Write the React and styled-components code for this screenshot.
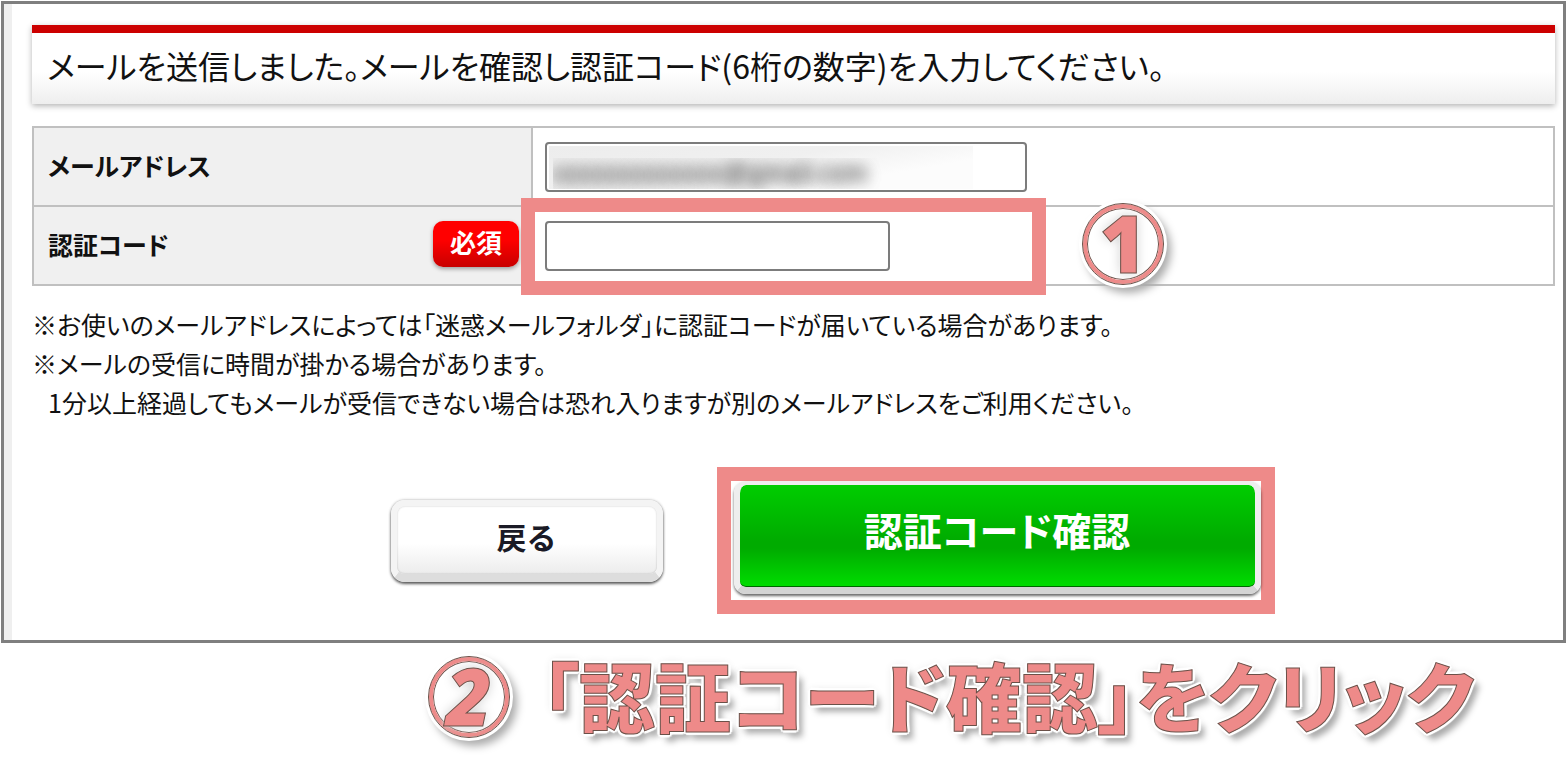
import { useState } from 'react';
import styled, { createGlobalStyle, css } from 'styled-components'

const PINK = '#ee8a89'

const GlobalStyle = createGlobalStyle`
  * {
    box-sizing: border-box;
  }

  body {
    margin: 0;
    background: #fff;
    color: #111;
    font-family: "Noto Sans CJK JP", sans-serif;
    font-feature-settings: "palt";
  }
`;

const Page = styled.main`
  padding: 1px 1px 16px;
`;

const Panel = styled.form`
  border: 3px solid #7f7f7f;
  box-shadow: inset 8px 0 0 #efefef;
  padding: 21px 8px 26px 28px;
`;

const Title = styled.h1`
  margin: 0 0 22px;
  padding: 12px 15px 19px;
  border-top: 8px solid #c00;
  background: linear-gradient(#fff 55%, #eee);
  box-shadow: 0 2px 6px rgba(0, 0, 0, 0.3);
  font-size: 32px;
  font-weight: 400;
  line-height: 40px;
`;

const Table = styled.table`
  width: 100%;
  border-collapse: collapse;
  table-layout: fixed;
`;

const Label = styled.th`
  width: 499px;
  height: 79px;
  padding: 0 12px 4px 14px;
  border: 2px solid #c0c0c0;
  background: #f0f0f0;
  font-size: 25px;
  font-weight: 700;
  text-align: left;
`;

const LabelRow = styled.div`
  display: flex;
  align-items: center;
  justify-content: space-between;
`;

const Required = styled.span`
  padding: 0 17px 4px;
  border-radius: 10px;
  background: linear-gradient(#f00 40%, #c80000);
  box-shadow: 0 2px 4px rgba(0, 0, 0, 0.35);
  color: #fff;
  font-size: 26px;
  font-weight: 700;
  line-height: 42px;
`;

const Field = styled.td`
  position: relative;
  padding: 0 12px;
  border: 2px solid #c0c0c0;
`;

const Input = styled.input`
  display: block;
  width: ${props => props.$wide ? '482px' : '345px'};
  height: 50px;
  padding: 2px 6px;
  border: 2px solid #7c7c7c;
  border-radius: 4px;
  background: #fff;
  font-family: "Liberation Sans", sans-serif;
  font-size: 26px;

  ${props => props.$masked && css`
    padding: 14px 6px 0;
    background: linear-gradient(170deg, #ededed, #f0f0f0 45%, #fcfcfc 75%) 2px 2px / 424px 43px no-repeat;
    color: transparent;
    text-shadow: 0 0 14px #666, 0 0 16px #888;
  `}
`;

const FieldFrame = styled.div`
  position: absolute;
  top: -9px;
  left: -12px;
  width: 525px;
  height: 97px;
  border: 14px solid ${PINK};
  pointer-events: none;
`;

const Notes = styled.div`
  margin-top: 19px;
  font-size: 25px;
  line-height: 39px;
`;

const Note = styled.p`
  margin: 0;
  padding-left: ${props => props.$indent ? '16px' : '0'};
`;

const Actions = styled.div`
  display: flex;
  align-items: center;
  justify-content: center;
  gap: 54px;
  margin-top: 45px;
  padding-left: 78px;
`;

const BackButton = styled.button`
  width: 272px;
  height: 82px;
  padding: 0 0 8px;
  border: 6px solid #f4f4f4;
  border-bottom: 8px solid #ddd;
  border-radius: 14px;
  background: linear-gradient(#fff 55%, #ececec) padding-box;
  box-shadow: 0 2px 3px rgba(0, 0, 0, 0.6), 0 0 3px rgba(0, 0, 0, 0.3), inset 0 0 2px rgba(0, 0, 0, 0.25);
  color: #1a1a26;
  font: 700 30px "Noto Sans CJK JP", sans-serif;
  cursor: pointer;
`;

const SubmitFrame = styled.div`
  padding: 0 0 6px 3px;
  border: 14px solid ${PINK};
`;

const SubmitButton = styled.button`
  display: block;
  width: 527px;
  height: 113px;
  padding: 0 0 14px;
  border: 6px solid #eee;
  border-top-width: 4px;
  border-bottom: 7px solid #d4d4d4;
  border-radius: 12px;
  background: linear-gradient(#00cd00, #00ab00 55%, #00ab00 62%, #00de00) padding-box;
  box-shadow: 0 2px 3px rgba(0, 0, 0, 0.6), inset 0 -1px 0 #060;
  color: #fff;
  font: 700 39px "Noto Sans CJK JP", sans-serif;
  font-feature-settings: "palt";
  cursor: pointer;
`;

// pink lettering with a thin dark outline, white edge and soft grey shadow
const lettering = css`
  color: ${PINK};
  font-weight: 900;
  -webkit-text-stroke: 1px #6b5048;
  text-shadow:
    3px 0 1px #fff, -3px 0 1px #fff, 0 3px 1px #fff, 0 -3px 1px #fff,
    2px 2px 1px #fff, -2px 2px 1px #fff, 2px -2px 1px #fff, -2px -2px 1px #fff,
    6px 7px 6px #aaa, 0 0 10px #ddd;
`;

const StepNumber = styled.span`
  display: flex;
  flex: none;
  align-items: center;
  justify-content: center;
  width: 80px;
  height: 80px;
  border: 4px solid ${PINK};
  border-radius: 50%;
  background: #fff;
  outline: 1px solid #6b5048;
  box-shadow: inset 0 0 0 1px #6b5048, 0 0 0 4px #fff, 5px 6px 8px 3px #aaa;
  ${lettering}
  text-shadow: 0 0 3px #fff, 0 0 12px #ccc;
  font-family: "Open Sans", sans-serif;
  font-size: 80px;
  font-style: ${props => props.$upright ? 'normal' : 'italic'};
  font-weight: 800;
  line-height: 68px;
  padding-bottom: 4px;
`;

const FieldStep = styled.div`
  position: absolute;
  top: -3px;
  left: 550px;
`;

const Caption = styled.div`
  display: flex;
  align-items: center;
  gap: 32px;
  padding: 4px 0 0 428px;
`;

const CaptionText = styled.p`
  margin: 0;
  padding-bottom: 6px;
  ${lettering}
  font-size: 76px;
  line-height: 94px;
  white-space: nowrap;
`;

export default function App() {
  const [email, setEmail] = useState('xxxxxxxxxxxxx@gmail.com');
  const [code, setCode] = useState('');

  return (
    <>
    <GlobalStyle />
    <Page>
      <Panel onSubmit={(e) => e.preventDefault()}>
        <Title>メールを送信しました。メールを確認し認証コード(6桁の数字)を入力してください。</Title>
        <Table>
          <tbody>
            <tr>
              <Label scope="row"><label htmlFor="email">メールアドレス</label></Label>
              <Field>
                <Input id="email" $wide $masked value={email} onChange={(e) => setEmail(e.target.value)} />
              </Field>
            </tr>
            <tr>
              <Label scope="row">
                <LabelRow>
                  <label htmlFor="code">認証コード</label>
                  <Required>必須</Required>
                </LabelRow>
              </Label>
              <Field>
                <Input id="code" value={code} onChange={(e) => setCode(e.target.value)} />
                <FieldFrame />
                <FieldStep><StepNumber $upright>1</StepNumber></FieldStep>
              </Field>
            </tr>
          </tbody>
        </Table>
        <Notes>
          <Note>※お使いのメールアドレスによっては「迷惑メールフォルダ」に認証コードが届いている場合があります。</Note>
          <Note>※メールの受信に時間が掛かる場合があります。</Note>
          <Note $indent>1分以上経過してもメールが受信できない場合は恐れ入りますが別のメールアドレスをご利用ください。</Note>
        </Notes>
        <Actions>
          <BackButton type="button">戻る</BackButton>
          <SubmitFrame>
            <SubmitButton type="submit">認証コード確認</SubmitButton>
          </SubmitFrame>
        </Actions>
      </Panel>
      <Caption>
        <StepNumber>2</StepNumber>
        <CaptionText>「認証コード確認」をクリック</CaptionText>
      </Caption>
    </Page>
    </>
  )
}
